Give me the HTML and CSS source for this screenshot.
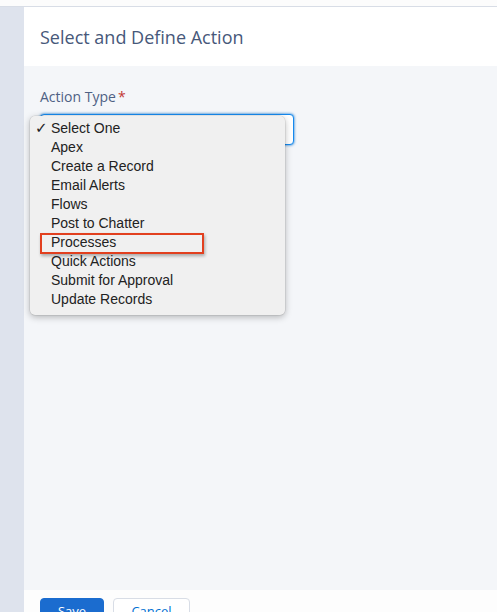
FILE: index.html
```html
<!DOCTYPE html>
<html>
<head>
<meta charset="utf-8">
<link rel="stylesheet" href="styles.css">
</head>
<body>
<div class="topstrip"></div>
<div class="main">
  <div class="sidebar"></div>
  <div class="panel">
    <div class="header"><h1 class="title">Select and Define Action</h1></div>
    <div class="body">
      <div class="label">Action Type<span class="req">*</span></div>
      <div class="field">
        <div class="select"></div>
        <ul class="menu">
          <li class="item checked"><span class="check">✓</span>Select One</li>
          <li class="item">Apex</li>
          <li class="item">Create a Record</li>
          <li class="item">Email Alerts</li>
          <li class="item">Flows</li>
          <li class="item">Post to Chatter</li>
          <li class="item hl">Processes<span class="box"></span></li>
          <li class="item">Quick Actions</li>
          <li class="item">Submit for Approval</li>
          <li class="item">Update Records</li>
        </ul>
      </div>
    </div>
    <div class="footer">
      <button class="btn save">Save</button>
      <button class="btn cancel">Cancel</button>
    </div>
  </div>
</div>
</body>
</html>
```
FILE: styles.css
```css
html, body { margin: 0; padding: 0; }
body {
  width: 497px; height: 612px; overflow: hidden;
  background: #fff;
  font-family: "Open Sans", "Liberation Sans", sans-serif;
}
.topstrip {
  height: 6px;
  background: #fcfcfc;
  border-bottom: 1px solid #d8dde6;
}
.main { display: flex; height: 605px; }
.sidebar { width: 24px; background: #dee3ed; flex: none; }
.panel { flex: 1; display: flex; flex-direction: column; }
.header { height: 59px; flex: none; background: #fff; padding-left: 16px; box-sizing: border-box; }
.title {
  margin: 0; padding-top: 18px;
  font-weight: 400; font-size: 18px; line-height: 24px;
  color: #47587a;
}
.body { flex: 1; background: #f4f6f9; padding: 22px 0 0 16px; }
.label { font-size: 14px; color: #4e6184; line-height: 18px; }
.req { color: #c23934; margin-left: 2px; }
.field { position: relative; margin-top: 8px; }
.select {
  width: 254px; height: 31px; box-sizing: border-box;
  border: 1px solid #1589ee; border-radius: 4px; background: #fff;
  box-shadow: 0 0 3px #0070d2;
}
.menu {
  position: absolute; left: -10px; top: 2px;
  width: 255px; height: 199px; box-sizing: border-box;
  margin: 0; padding: 3px 0 0 0; list-style: none;
  background: #f0f0f0;
  border-radius: 5px;
  box-shadow: 0 2px 7px rgba(0,0,0,0.28), 0 0 0 0.5px rgba(0,0,0,0.12);
  font-family: "Liberation Sans", Arial, sans-serif;
  font-size: 14px; color: #222;
}
.item { position: relative; height: 19px; line-height: 19px; padding-left: 21px; }
.check { position: absolute; left: 5px; top: 0; font-family: "DejaVu Sans", sans-serif; font-size: 15px; }
.box {
  position: absolute; left: 10px; top: 0px; width: 164px; height: 21px;
  box-sizing: border-box; border: 2px solid #e2401f;
  box-shadow: 1px 2px 3px rgba(0,0,0,0.3);
}
.footer { height: 14px; flex: none; background: #fdfdfd; padding-left: 16px; padding-top: 8px; display: flex; gap: 9px; overflow: hidden; }
.btn {
  height: 26px; flex: none; border-radius: 4px; font-size: 13px; padding: 0;
  font-family: "Open Sans", "Liberation Sans", sans-serif;
}
.save { width: 64px; background: #1b6ccf; color: #fff; border: 1px solid #1b6ccf; }
.cancel { width: 77px; background: #fff; color: #0070d2; border: 1px solid #d8dde6; }
```
